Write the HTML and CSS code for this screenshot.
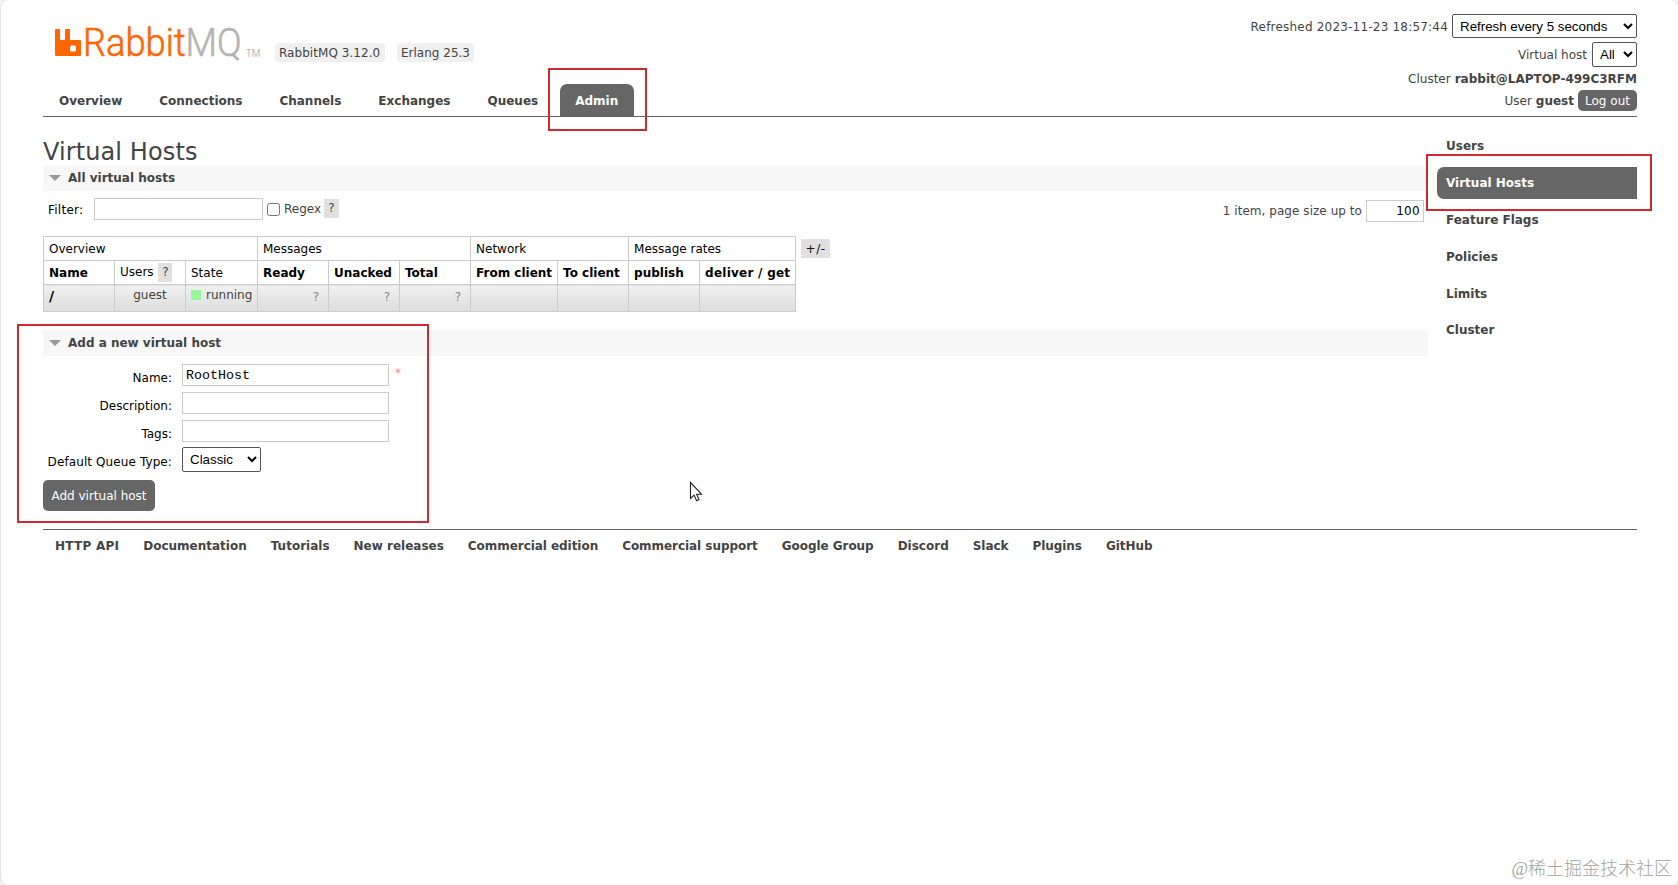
FILE: index.html
```
<!DOCTYPE html>
<html lang="en">
<head>
    <meta charset="UTF-8">
    <meta name="viewport" content="width=device-width, initial-scale=1.0">
    <title>RabbitMQ Management</title>
    <link rel="stylesheet" href="styles.css">
</head>
<body>
    <div class="page">
        <header class="header">
            <div class="brand">
                <svg class="logo" width="210" height="60" viewBox="0 -14 210 60">
                    <path fill="#ff6600" d="M2 5h3a1 1 0 0 1 1 1v9a1 1 0 0 0 1 1h3a1 1 0 0 0 1-1V6a1 1 0 0 1 1-1h3a1 1 0 0 1 1 1v9a1 1 0 0 0 1 1h9a1 1 0 0 1 1 1v14a1 1 0 0 1-1 1H2a1 1 0 0 1-1-1V6a1 1 0 0 1 1-1z"/>
                    <rect x="16" y="21.5" width="6" height="6" rx="1.5" fill="#fff"/>
                    <text class="logo-text" transform="translate(29 32) scale(0.955 1)">Rabbit</text>
                    <text class="logo-text logo-mq" transform="translate(131.5 32) scale(0.955 1)">MQ</text>
                    <text class="logo-tm" x="192" y="32.5">TM</text>
                </svg>
                <span class="version version-mq">RabbitMQ 3.12.0</span>
                <span class="version version-erl">Erlang 25.3</span>
            </div>
            <nav class="tabs">
                <a>Overview</a>
                <a>Connections</a>
                <a>Channels</a>
                <a>Exchanges</a>
                <a>Queues</a>
                <a class="selected">Admin</a>
            </nav>
            <div class="login">
                <div class="login-row refresh"><span class="refreshed">Refreshed 2023-11-23 18:57:44</span>
                    <select class="select-refresh"><option>Refresh every 5 seconds</option></select>
                </div>
                <div class="login-row vhost">Virtual host
                    <select class="select-vhost"><option>All</option></select>
                </div>
                <div class="login-row cluster">Cluster <b>rabbit@LAPTOP-499C3RFM</b></div>
                <div class="login-row user">User <b>guest</b> <button class="logout">Log out</button></div>
            </div>
        </header>

        <div class="columns">
            <main class="main">
                <h1>Virtual Hosts</h1>
                <h2 class="first">All virtual hosts</h2>
                <div class="filter">
                    <label>Filter:</label>
                    <input type="text" class="filter-input">
                    <input type="checkbox" class="regex">
                    <span class="regex-label">Regex</span>
                    <span class="help">?</span>
                    <span class="paging">1 item, page size up to</span>
                    <input type="text" class="page-size" value="100">
                </div>
                <div class="table-wrap">
                    <table class="list">
                        <colgroup>
                            <col class="w71"><col class="w71"><col class="w72">
                            <col class="w71"><col class="w71"><col class="w71">
                            <col class="w87"><col class="w71">
                            <col class="w71"><col class="w96">
                        </colgroup>
                        <tr>
                            <th colspan="3">Overview</th>
                            <th colspan="3">Messages</th>
                            <th colspan="2">Network</th>
                            <th colspan="2">Message rates</th>
                        </tr>
                        <tr class="sort">
                            <th><b>Name</b></th>
                            <th>Users <span class="help">?</span></th>
                            <th>State</th>
                            <th><b>Ready</b></th>
                            <th><b>Unacked</b></th>
                            <th><b>Total</b></th>
                            <th><b>From client</b></th>
                            <th><b>To client</b></th>
                            <th><b>publish</b></th>
                            <th><b class="deliver">deliver / get</b></th>
                        </tr>
                        <tr class="row">
                            <td class="name">/</td>
                            <td class="users">guest</td>
                            <td class="state"><i class="dot"></i>running</td>
                            <td class="unknown">?</td>
                            <td class="unknown">?</td>
                            <td class="unknown">?</td>
                            <td></td>
                            <td></td>
                            <td></td>
                            <td></td>
                        </tr>
                    </table>
                    <span class="toggle-columns">+/-</span>
                </div>
                <h2 class="second">Add a new virtual host</h2>
                <form class="form">
                    <label>Name:</label>
                    <div><input type="text" value="RootHost"><span class="mand">*</span></div>
                    <label>Description:</label>
                    <div><input type="text"></div>
                    <label>Tags:</label>
                    <div><input type="text"></div>
                    <label class="queue-type">Default Queue Type:</label>
                    <div><select class="select-queue"><option>Classic</option></select></div>
                </form>
                <button class="add">Add virtual host</button>
            </main>
            <nav class="side">
                <a>Users</a>
                <a class="selected">Virtual Hosts</a>
                <a>Feature Flags</a>
                <a>Policies</a>
                <a>Limits</a>
                <a>Cluster</a>
            </nav>
        </div>

        <footer class="footer">
            <a class="api">HTTP API</a>
            <a>Documentation</a>
            <a>Tutorials</a>
            <a>New releases</a>
            <a class="tight">Commercial edition</a>
            <a class="tight">Commercial support</a>
            <a class="tight">Google Group</a>
            <a>Discord</a>
            <a class="tight">Slack</a>
            <a class="tight">Plugins</a>
            <a class="tight">GitHub</a>
        </footer>

        <!-- annotations over the page -->
        <div class="mark mark-admin"></div>
        <div class="mark mark-vhosts"></div>
        <div class="mark mark-form"></div>
        <svg class="cursor" width="14" height="21" viewBox="0 0 14 21">
            <path d="M1.5 1.5v16l3.6-3.4 2.5 5.6 2.4-1.1-2.4-5.4h4.9z" fill="#fff" stroke="#222" stroke-width="1.1"/>
        </svg>
        <div class="watermark">@稀土掘金技术社区</div>
    </div>
</body>
</html>
```

FILE: styles.css
```
* {
    box-sizing: border-box;
}
body {
    margin: 0;
    background: #f0f0f0;
    font-family: Verdana, "DejaVu Sans", sans-serif;
    font-size: 12px;
    line-height: 16px;
    color: #444;
}
.page {
    position: relative;
    width: 1678px;
    height: 885px;
    padding: 0 41px 0 42px;
    overflow: hidden;
    background: #fff;
    border-left: 1px solid #e4e4e4;
    border-radius: 9px;
}
a {
    color: #444;
    font-weight: bold;
    white-space: nowrap;
}

/* header */
.header {
    display: grid;
    grid-template-columns: 1fr 500px;
    grid-template-rows: 84px 32px;
    height: 117px;
    border-bottom: 1px solid #666;
}
.brand {
    display: flex;
    align-items: flex-start;
    padding: 10px 0 0 11px;
}
.logo-text {
    font-family: Roboto, "Open Sans", sans-serif;
    font-weight: 300;
    font-size: 38px;
    fill: #ff6600;
    stroke: #ff6600;
    stroke-width: 0.6px;
}
.logo-mq {
    fill: #b4b4b4;
    stroke: #b4b4b4;
}
.logo-tm {
    font-family: "Open Sans", sans-serif;
    font-size: 10px;
    fill: #b4b4b4;
}
.version {
    height: 19px;
    margin-top: 33px;
    padding: 2px 0 0 4px;
    line-height: 17px;
    background: #f0f0f0;
    border-radius: 4px;
    white-space: nowrap;
}
.version-mq {
    width: 110px;
    margin-left: 11px;
    letter-spacing: 0.05px;
}
.version-erl {
    width: 77px;
    margin-left: 12px;
}
.tabs {
    grid-row: 2;
    display: flex;
    gap: 7px;
    padding-left: 1px;
}
.tabs a {
    height: 32px;
    padding: 9px 15px 0;
    border-radius: 7px 7px 0 0;
}
.tabs .selected {
    padding-right: 16px;
    background: #666;
    color: #fff;
}
.login {
    grid-column: 2;
    grid-row: 1 / 3;
    padding-top: 14px;
}
.login-row {
    display: flex;
    justify-content: flex-end;
    align-items: center;
    gap: 4px;
    white-space: nowrap;
}
.refresh {
    height: 24px;
}
.refreshed {
    padding-top: 1px;
    letter-spacing: 0.2px;
}
.vhost {
    height: 25px;
    margin-top: 4px;
    gap: 5px;
}
.cluster {
    height: 23px;
}
.user {
    height: 21px;
}
select {
    height: 25px;
    padding: 0 0 0 3px;
    font-family: "Liberation Sans", Arial, sans-serif;
    font-size: 13.33px;
    color: #000;
    background: #fff;
    border: 1px solid #555;
    border-radius: 2px;
}
.select-refresh {
    width: 185px;
    height: 24px;
}
.select-vhost {
    width: 45px;
}
.select-queue {
    width: 79px;
}
button {
    background: #666;
    border: 0;
    border-radius: 5px;
    padding: 0;
    color: #fff;
    font-family: inherit;
    font-size: 12px;
}
.logout {
    width: 59px;
    height: 21px;
}

/* content */
.columns {
    display: flex;
    justify-content: space-between;
    height: 412px;
}
.main {
    width: 1385px;
}
h1 {
    margin: 0;
    padding-top: 21px;
    height: 49px;
    font-size: 24px;
    line-height: 28px;
    font-weight: normal;
    letter-spacing: 0.1px;
}
h2 {
    display: flex;
    align-items: center;
    height: 26px;
    margin: 0;
    padding: 0 0 0 6px;
    font-size: 12px;
    background: #f7f7f7;
}
h2::before {
    content: "";
    width: 0;
    margin-right: 7px;
    border: 6px solid transparent;
    border-top: 6px solid #999;
    border-bottom: 0;
}
.first {
    height: 25px;
    padding-bottom: 2px;
}
.second {
    margin-top: 18px;
}
input[type="text"] {
    height: 22px;
    padding: 1px 3px;
    font-family: "Liberation Mono", "Courier New", monospace;
    font-size: 13.33px;
    color: #000;
    border: 1px solid #ccc;
    border-radius: 0;
}
.filter {
    display: flex;
    align-items: flex-start;
    height: 45px;
    padding: 7px 4px 0 5px;
}
.filter label {
    width: 46px;
    padding-top: 4px;
    color: #000;
    letter-spacing: 0.25px;
}
.filter-input {
    width: 169px;
}
.regex {
    width: 13px;
    height: 13px;
    margin: 5px 4px 0;
}
.regex-label {
    width: 40px;
    padding-top: 3px;
}
.help {
    display: inline-block;
    width: 15px;
    height: 19px;
    line-height: 19px;
    text-align: center;
    background: #e0e0e0;
    color: #444;
}
.filter .help {
    margin-top: 1px;
}
.paging {
    margin: 5px 4px 0 auto;
    letter-spacing: 0.05px;
}
.filter .page-size {
    width: 58px;
    margin-top: 2px;
    text-align: right;
    font-family: Verdana, "DejaVu Sans", sans-serif;
    font-size: 12px;
    letter-spacing: 0.3px;
}
.table-wrap {
    display: flex;
    align-items: flex-start;
    gap: 5px;
}
.list {
    width: 753px;
    table-layout: fixed;
    border-collapse: collapse;
    color: #000;
}
.list th,
.list td {
    height: 24px;
    padding: 0 0 0 5px;
    border: 1px solid #ccc;
    text-align: left;
    font-weight: normal;
    white-space: nowrap;
}
.w71 { width: 71px; }
.w72 { width: 72px; }
.w87 { width: 87px; }
.w96 { width: 96px; }
.deliver {
    letter-spacing: 0.25px;
}
.list .row td {
    height: 27px;
    background: linear-gradient(#f0f0f0, #dddddd);
    color: #444;
}
.list .sort .help {
    width: 14px;
    margin-left: 1px;
    vertical-align: middle;
}
.list .row .name {
    padding-bottom: 5px;
    font-weight: bold;
    font-size: 14px;
    color: #000;
}
.list .row .users {
    padding: 0 0 6px;
    text-align: center;
}
.list .row .state {
    padding-bottom: 6px;
}
.dot {
    display: inline-block;
    width: 10px;
    height: 10px;
    margin-right: 5px;
    background: #98f898;
    vertical-align: -1px;
}
.list .row .unknown {
    padding: 0 9px 2px 0;
    text-align: right;
    color: #888;
}
.toggle-columns {
    width: 29px;
    height: 19px;
    margin-top: 3px;
    line-height: 20px;
    letter-spacing: 0.5px;
    text-align: center;
    color: #111;
    background: #e0e0e0;
}

/* add form */
.form {
    display: grid;
    grid-template-columns: 129px 1fr;
    grid-auto-rows: 28px;
    column-gap: 10px;
    padding-top: 8px;
}
.form label {
    padding-top: 6px;
    text-align: right;
    color: #000;
    white-space: nowrap;
}
.form .queue-type {
    letter-spacing: 0.1px;
}
.form div {
    display: flex;
    align-items: flex-start;
}
.form input {
    width: 207px;
}
.form .select-queue {
    margin-top: -1px;
}
.mand {
    margin: 1px 0 0 6px;
    color: #f88;
}
.add {
    display: block;
    width: 112px;
    height: 31px;
    margin-top: 4px;
}

/* side menu */
.side {
    display: flex;
    flex-direction: column;
    gap: 5px;
    width: 200px;
    padding-top: 13px;
}
.side a {
    height: 32px;
    padding: 8px 9px;
    border-radius: 7px 0 0 7px;
}
.side a:last-child {
    padding-top: 7px;
}
.side .selected {
    background: #666;
    color: #fff;
}

.footer {
    display: flex;
    gap: 24px;
    padding: 8px 12px;
    border-top: 1px solid #666;
}
.footer .api {
    letter-spacing: 0.25px;
}
.footer .tight {
    letter-spacing: -0.05px;
}

/* annotations */
.mark {
    position: absolute;
    border: 2px solid #cf2a30;
}
.mark-admin {
    left: 547px;
    top: 68px;
    width: 99px;
    height: 63px;
}
.mark-vhosts {
    left: 1425px;
    top: 154px;
    width: 226px;
    height: 57px;
}
.mark-form {
    left: 16px;
    top: 324px;
    width: 412px;
    height: 199px;
}
.cursor {
    position: absolute;
    left: 688px;
    top: 481px;
}
.watermark {
    position: absolute;
    right: 6px;
    bottom: 4px;
    font-family: "Liberation Serif", "Noto Sans CJK SC", sans-serif;
    font-weight: 300;
    font-size: 18px;
    line-height: 24px;
    color: #a4a4a4;
}
```
